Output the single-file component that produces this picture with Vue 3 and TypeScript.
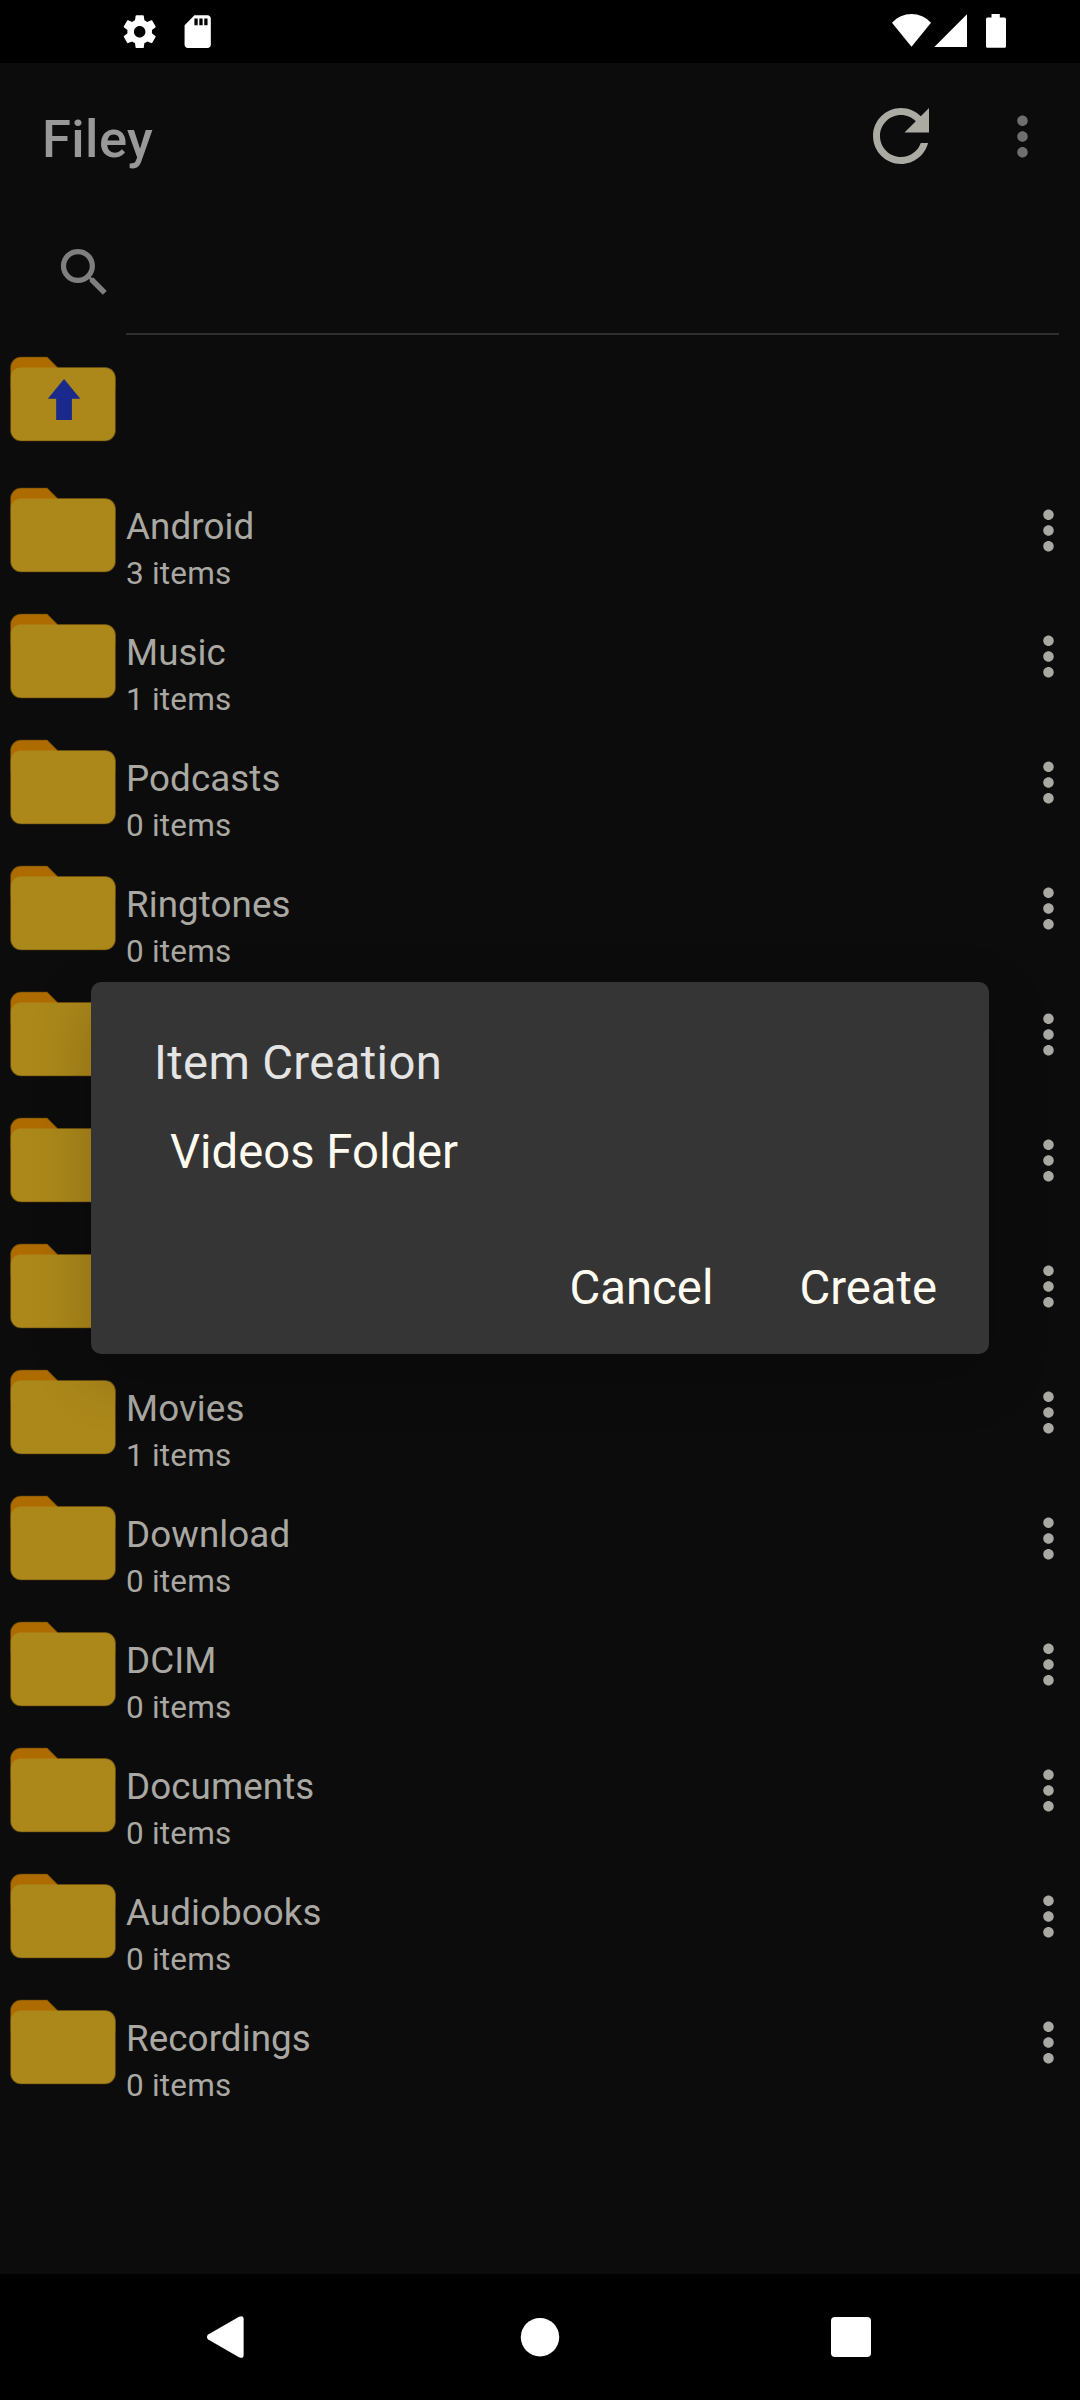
<script setup lang="ts">
interface Folder {
  id: number
  name?: string
  count?: number
}

// Rows 5-7 lie behind the dialog and carry no visible label.
const folders: Folder[] = [
  { id: 1, name: 'Android', count: 3 },
  { id: 2, name: 'Music', count: 1 },
  { id: 3, name: 'Podcasts', count: 0 },
  { id: 4, name: 'Ringtones', count: 0 },
  { id: 5 },
  { id: 6 },
  { id: 7 },
  { id: 8, name: 'Movies', count: 1 },
  { id: 9, name: 'Download', count: 0 },
  { id: 10, name: 'DCIM', count: 0 },
  { id: 11, name: 'Documents', count: 0 },
  { id: 12, name: 'Audiobooks', count: 0 },
  { id: 13, name: 'Recordings', count: 0 },
]

const folderOutline =
  'M40 12H22l-4-4H8c-2.2 0-4 1.8-4 4v24c0 2.2 1.8 4 4 4h32c2.2 0 4-1.8 4-4V16c0-2.2-1.8-4-4-4z'
const folderBack = 'M40 12H22l-4-4H8c-2.2 0-4 1.8-4 4v8h40v-4c0-2.2-1.8-4-4-4z'
const folderFront =
  'M40 12H8c-2.2 0-4 1.8-4 4v20c0 2.2 1.8 4 4 4h32c2.2 0 4-1.8 4-4V16c0-2.2-1.8-4-4-4z'
const moreDots =
  'M12 8c1.1 0 2-.9 2-2s-.9-2-2-2-2 .9-2 2 .9 2 2 2zm0 2c-1.1 0-2 .9-2 2s.9 2 2 2 2-.9 2-2-.9-2-2-2zm0 6c-1.1 0-2 .9-2 2s.9 2 2 2 2-.9 2-2-.9-2-2-2z'
</script>

<template>
  <div class="screen">
    <header class="status">
      <div class="status-left">
        <svg class="status-icon" viewBox="0 0 24 24">
          <path
            d="M19.43 12.98c.04-.32.07-.64.07-.98s-.03-.66-.07-.98l2.11-1.65c.19-.15.24-.42.12-.64l-2-3.46c-.12-.22-.39-.3-.61-.22l-2.49 1c-.52-.4-1.08-.73-1.69-.98l-.38-2.65C14.46 2.18 14.25 2 14 2h-4c-.25 0-.46.18-.49.42l-.38 2.65c-.61.25-1.17.59-1.69.98l-2.49-1c-.23-.09-.49 0-.61.22l-2 3.46c-.13.22-.07.49.12.64l2.11 1.65c-.04.32-.07.65-.07.98s.03.66.07.98l-2.11 1.65c-.19.15-.24.42-.12.64l2 3.46c.12.22.39.3.61.22l2.49-1c.52.4 1.08.73 1.69.98l.38 2.65c.03.24.24.42.49.42h4c.25 0 .46-.18.49-.42l.38-2.65c.61-.25 1.17-.59 1.69-.98l2.49 1c.23.09.49 0 .61-.22l2-3.46c.12-.22.07-.49-.12-.64l-2.11-1.65zM12 15.5c-1.93 0-3.5-1.57-3.5-3.5s1.57-3.5 3.5-3.5 3.5 1.57 3.5 3.5-1.57 3.5-3.5 3.5z"
          />
        </svg>
        <svg class="status-icon" viewBox="0 0 24 24">
          <path
            d="M18 2h-8L4.02 8 4 20c0 1.1.9 2 2 2h12c1.1 0 2-.9 2-2V4c0-1.1-.9-2-2-2zm-6 6h-2V4h2v4zm3 0h-2V4h2v4zm3 0h-2V4h2v4z"
          />
        </svg>
      </div>
      <svg class="status-right" viewBox="0 0 120 63">
        <path d="M21.5 46.7L2 22.8A26.2 26.2 0 0 1 41 22.8z" />
        <path d="M44.3 47L77 14.2V47z" />
        <path
          d="M101.5 14h8.3v3.4h4.7a1.5 1.5 0 0 1 1.5 1.5v27.3a1.5 1.5 0 0 1-1.5 1.5h-17a1.5 1.5 0 0 1-1.5-1.5V18.9a1.5 1.5 0 0 1 1.5-1.5h4z"
        />
      </svg>
    </header>

    <main class="app">
      <div class="toolbar">
        <h1 class="title">Filey</h1>
        <svg class="refresh" viewBox="0 0 24 24">
          <path
            d="M17.65 6.35C16.2 4.9 14.21 4 12 4c-4.42 0-7.99 3.58-7.99 8s3.57 8 7.99 8c3.73 0 6.84-2.55 7.73-6h-2.08c-.82 2.33-3.04 4-5.65 4-3.31 0-6-2.69-6-6s2.69-6 6-6c1.66 0 3.14.69 4.22 1.78L13 11h7V4l-2.35 2.35z"
          />
        </svg>
        <svg class="overflow" viewBox="0 0 24 24"><path :d="moreDots" /></svg>
      </div>

      <div class="search">
        <svg class="search-icon" viewBox="0 0 24 24">
          <path
            d="M15.5 14h-.79l-.28-.27C15.41 12.59 16 11.11 16 9.5 16 5.91 13.09 3 9.5 3S3 5.91 3 9.5 5.91 16 9.5 16c1.61 0 3.09-.59 4.23-1.57l.27.28v.79l5 4.99L20.49 19l-4.99-5zm-6 0C7.01 14 5 11.99 5 9.5S7.01 5 9.5 5 14 7.01 14 9.5 11.99 14 9.5 14z"
          />
        </svg>
        <div class="search-field"></div>
      </div>

      <div class="row up">
        <svg class="folder" viewBox="0 0 48 48">
          <path class="back" :d="folderBack" />
          <path class="front" :d="folderFront" />
          <path class="outline" :d="folderOutline" />
          <path class="arrow" d="M24.4 16.4l6.2 7.5h-3.2V32h-6v-8.1h-3.2z" />
        </svg>
      </div>

      <ul class="list">
        <li v-for="folder in folders" :key="folder.id" class="row">
          <svg class="folder" viewBox="0 0 48 48">
            <path class="back" :d="folderBack" />
            <path class="front" :d="folderFront" />
            <path class="outline" :d="folderOutline" />
          </svg>
          <div class="info">
            <template v-if="folder.name">
              <span class="name">{{ folder.name }}</span>
              <span class="count">{{ folder.count }} items</span>
            </template>
          </div>
          <svg class="more" viewBox="0 0 24 24"><path :d="moreDots" /></svg>
        </li>
      </ul>
    </main>

    <nav class="nav">
      <svg viewBox="0 0 1080 126">
        <path
          d="M208.2 60.4L239 42.8Q243.6 40.8 243.6 45V81Q243.6 85.2 239 83.2L208.2 65.6Q205.7 63 208.2 60.4z"
        />
        <circle cx="540" cy="63.2" r="19.2" />
        <rect x="831" y="43" width="40" height="40" rx="4" />
      </svg>
    </nav>

    <section class="dialog" role="dialog">
      <h2 class="dialog-title">Item Creation</h2>
      <p class="dialog-value">Videos Folder</p>
      <div class="actions">
        <button type="button">Cancel</button>
        <button type="button">Create</button>
      </div>
    </section>
  </div>
</template>

<style>
body {
  margin: 0;
  background: #000;
}
</style>

<style scoped>
.screen {
  position: relative;
  display: flex;
  flex-direction: column;
  width: 1080px;
  height: 2400px;
  overflow: hidden;
  background: #000;
  font-family: Roboto, 'Noto Sans', sans-serif;
}

svg {
  display: block;
  flex: none;
}

.status {
  display: flex;
  flex: none;
  justify-content: space-between;
  height: 63px;
  fill: #fff;
}

.status-left {
  display: flex;
  align-items: center;
  gap: 18.5px;
  padding-left: 120.3px;
}

.status-icon {
  width: 39.4px;
  height: 39.4px;
}

.status-right {
  width: 120px;
  height: 63px;
  margin-right: 70px;
}

.app {
  flex: 1;
  min-height: 0;
  overflow: hidden;
  background: #0c0c0c;
}

.toolbar {
  display: flex;
  align-items: center;
  box-sizing: border-box;
  height: 146px;
  padding: 0 26px 0 42px;
}

.title {
  flex: 1;
  margin: 0;
  padding-top: 6px;
  color: #999;
  font-size: 52.5px;
  font-weight: 500;
  letter-spacing: 0.4px;
  line-height: 62px;
}

.refresh {
  width: 84px;
  height: 84px;
  margin-right: 48px;
  fill: #abaaa3;
}

.overflow {
  width: 63px;
  height: 63px;
  fill: #6f6f6f;
}

.search {
  display: flex;
  align-items: center;
  height: 126px;
  padding: 0 21px 0 53px;
}

.search-icon {
  width: 63px;
  height: 63px;
  margin-right: 10px;
  fill: #7f7f7f;
}

.search-field {
  flex: 1;
  box-sizing: border-box;
  height: 126px;
  border-bottom: 2px solid #2f2f2f;
}

.row {
  display: flex;
  align-items: center;
  height: 126px;
}

.up {
  margin: 1px 0 5px;
}

.list {
  margin: 0;
  padding: 0;
  list-style: none;
}

.folder {
  width: 126px;
  height: 126px;
}

.back {
  fill: #ae6c00;
}

.front {
  fill: #ac881b;
}

.outline {
  fill: none;
  stroke: rgba(84, 62, 12, 0.55);
  stroke-width: 0.4;
}

.arrow {
  fill: #1a2a8c;
}

.info {
  display: flex;
  flex: 1;
  flex-direction: column;
  gap: 7px;
  align-self: flex-end;
  padding-bottom: 1px;
  color: #a9a8a2;
}

.name {
  font-size: 36.75px;
  letter-spacing: 0.08px;
  line-height: 43px;
}

.count {
  font-size: 31.5px;
  letter-spacing: 0.2px;
  line-height: 37px;
}

.more {
  width: 63px;
  height: 63px;
  fill: #a9a8a2;
}

.nav {
  flex: none;
  height: 126px;
  fill: #fff;
}

.dialog {
  position: absolute;
  top: 982px;
  left: 91px;
  box-sizing: border-box;
  width: 898px;
  height: 372px;
  padding: 53px 42px 0 63px;
  border-radius: 10px;
  background: #353535;
  box-shadow: 0 20px 60px rgba(0, 0, 0, 0.22);
  font-size: 47.25px;
  line-height: 56px;
}

.dialog-title,
.dialog-value {
  margin: 0;
  font-size: inherit;
  font-weight: 400;
}

.dialog-title {
  color: #e4e4e4;
  letter-spacing: 0.35px;
}

.dialog-value {
  margin-top: 33px;
  padding-left: 16px;
  color: #fffbf0;
}

.actions {
  display: flex;
  justify-content: flex-end;
  gap: 86px;
  margin-top: 80px;
  padding-right: 10px;
}

.actions button {
  padding: 0;
  border: 0;
  background: none;
  color: #fffbf0;
  font: inherit;
}
</style>
